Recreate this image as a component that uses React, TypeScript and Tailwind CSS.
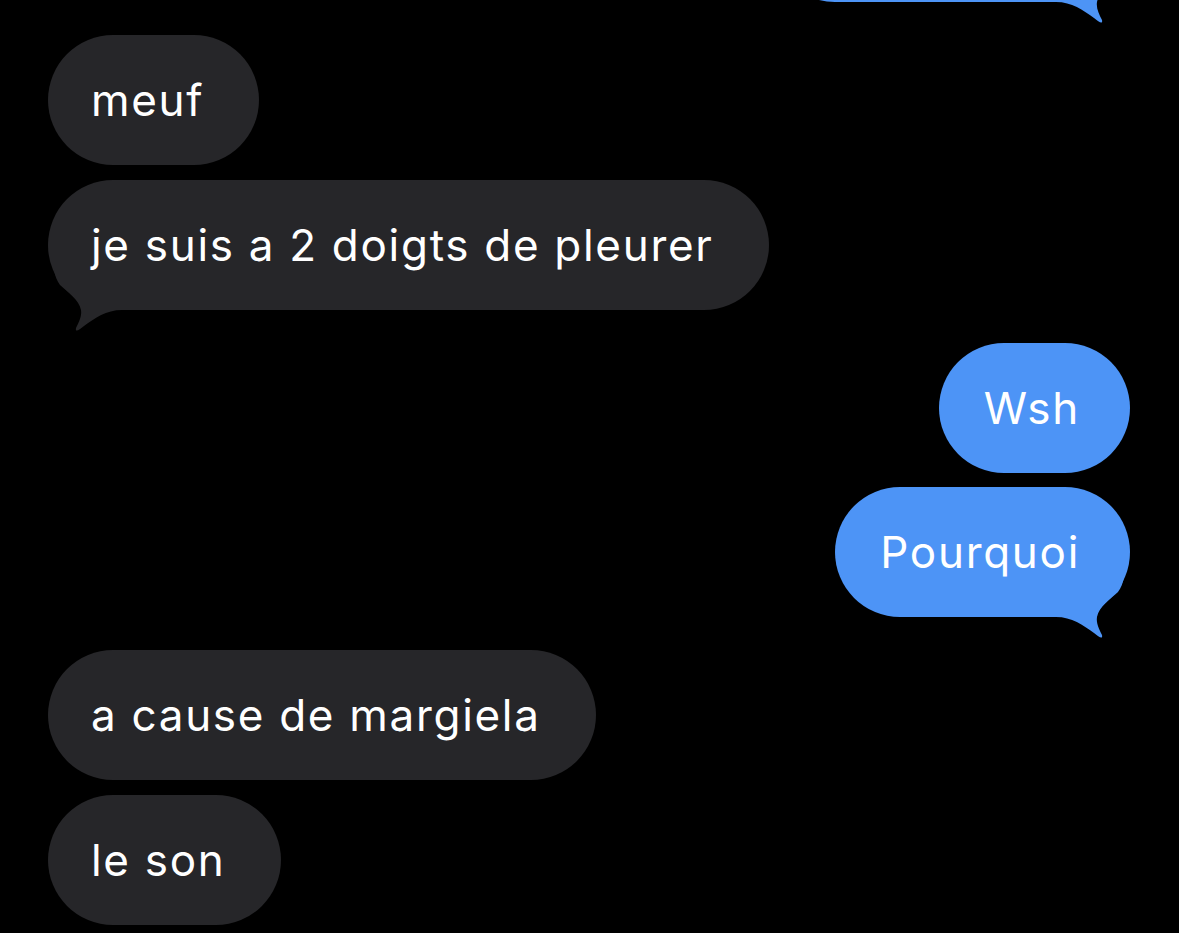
import React from "react";

type Msg = { from: "me" | "them"; text: string; tail?: boolean; gap: string };

const msgs: Msg[] = [
  { from: "them", text: "meuf", gap: "mt-[33px]" },
  { from: "them", text: "je suis a 2 doigts de pleurer", tail: true, gap: "mt-[15px]" },
  { from: "me", text: "Wsh", gap: "mt-[33px]" },
  { from: "me", text: "Pourquoi", tail: true, gap: "mt-[14px]" },
  { from: "them", text: "a cause de margiela", gap: "mt-[33px]" },
  { from: "them", text: "le son", gap: "mt-[15px]" },
];

// Bubble tail, drawn for the right side; mirrored for the left
function Tail({ color, left }: { color: string; left?: boolean }) {
  return (
    <svg
      width="60"
      height="60"
      viewBox="0 0 60 60"
      className={`absolute bottom-[-22px] overflow-visible ${left ? "left-0 -scale-x-100" : "right-0"}`}
    >
      <path
        d="M-14 38 C2 38 13 46 24 54 C29 58 33 61 32 56 C29 50 26 44 27 38 C29 28 40 20 48 13 C51 9 53 4 54 -2 L-14 -2 Z"
        fill={color}
      />
    </svg>
  );
}

function Bubble({ msg }: { msg: Msg }) {
  const me = msg.from == "me";
  const color = me ? "#4d94f6" : "#262629";
  return (
    <div className={`flex ${me ? "justify-end" : "justify-start"} ${msg.gap}`}>
      <div
        className={`relative h-[130px] flex items-center rounded-full ${me ? "bg-[#4d94f6] pl-[45px] pr-[50px]" : "bg-[#262629] pl-[43px] pr-[55px]"
          }`}
      >
        {msg.tail && <Tail color={color} left={!me} />}
        <span className="relative text-white text-[44px] leading-none tracking-[1.7px]">
          {msg.text}
        </span>
      </div>
    </div>
  );
}

export default function App() {
  return (
    <div
      className="w-[1179px] h-[933px] overflow-hidden bg-black pl-[48px] pr-[49px]"
      style={{ fontFamily: "Inter, 'Noto Sans', sans-serif" }}
    >
      {/* last bubble of the previous block, cut off at the top */}
      <div className="flex justify-end mt-[-128px]">
        <div className="relative h-[130px] w-[360px] rounded-full bg-[#4d94f6]">
          <Tail color="#4d94f6" />
        </div>
      </div>
      {msgs.map((m, idx) => (
        <Bubble msg={m} key={idx} />
      ))}
    </div>
  );
}
